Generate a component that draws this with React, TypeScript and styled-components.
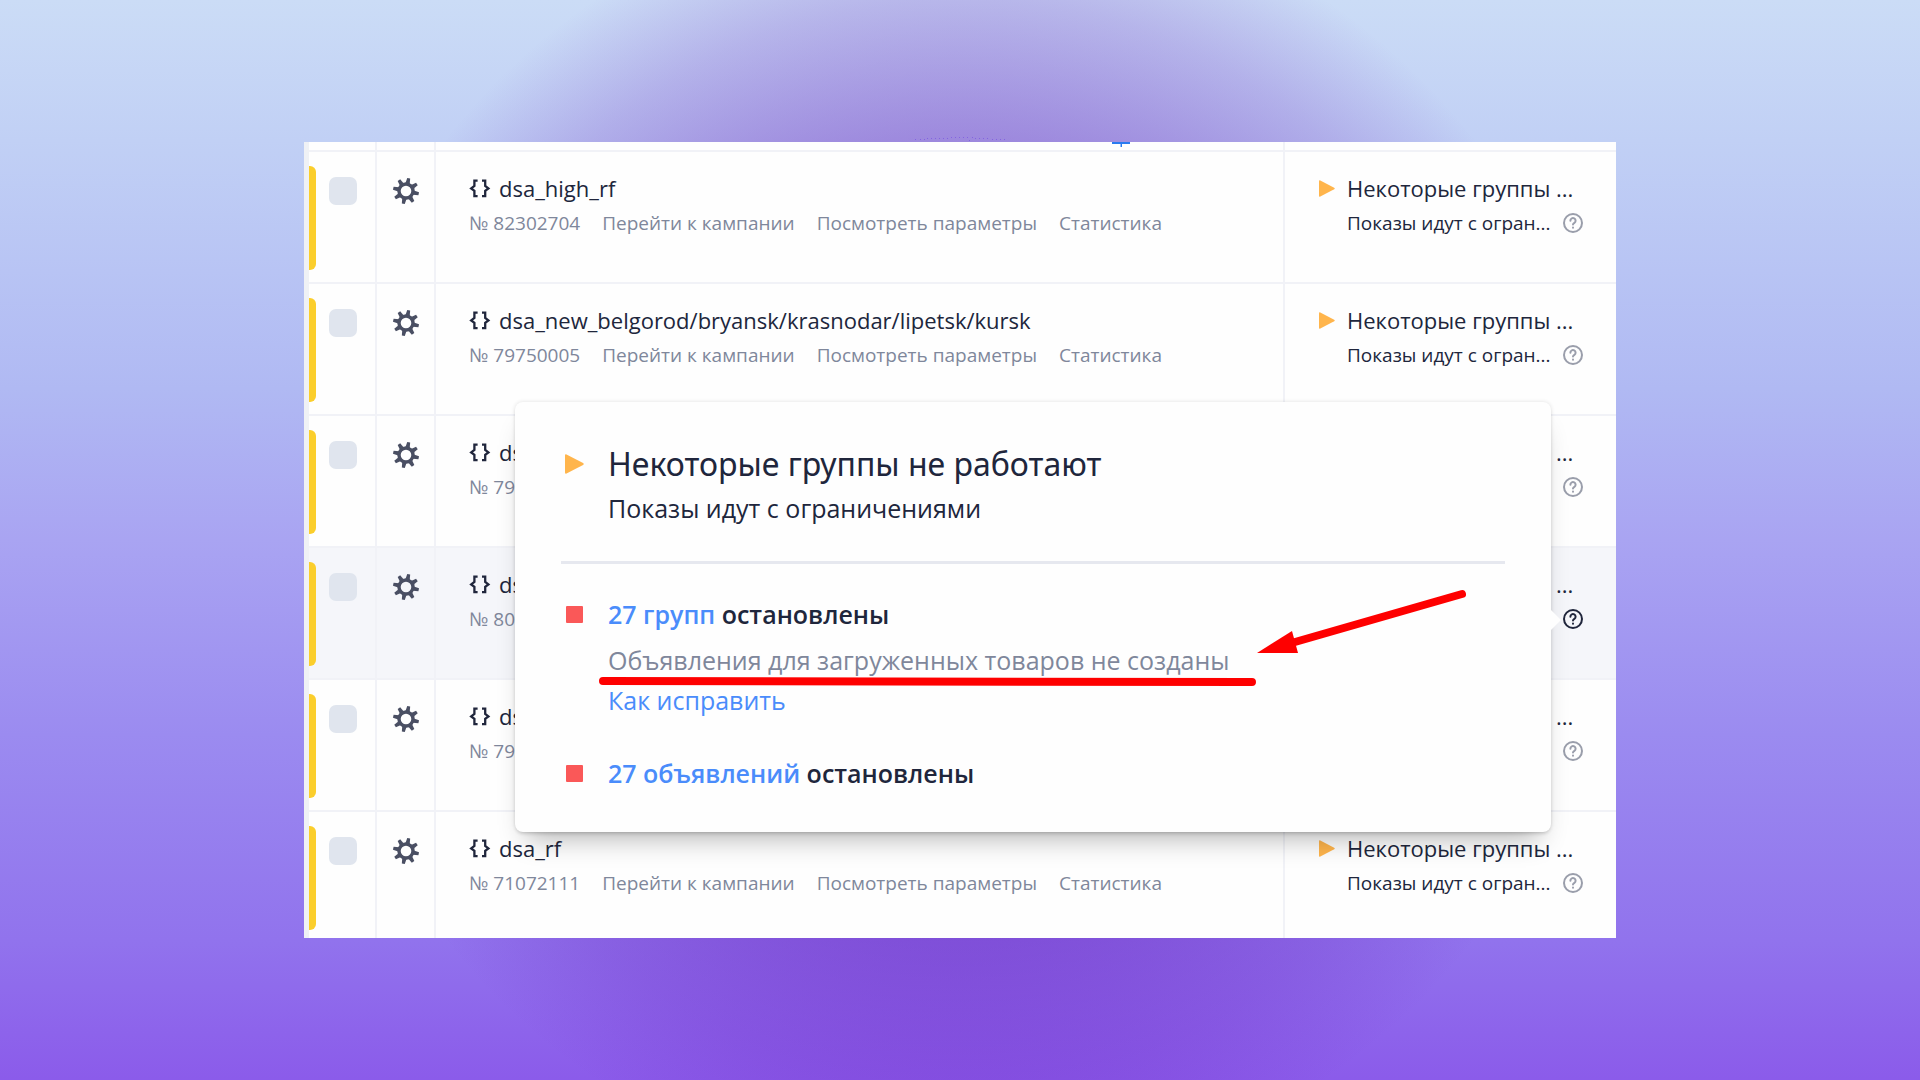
import React from "react";
import styled, { createGlobalStyle } from "styled-components";

const ink = "#20263c";
const muted = "#7f879b";
const line = "#f1f2f7";
const blue = "#4a8cfb";

const GlobalStyle = createGlobalStyle`
  *, *::before, *::after { box-sizing: border-box; }
  body {
    margin: 0;
    font-family: "Open Sans", "Noto Sans", sans-serif;
    color: ${ink};
  }
`;

const Page = styled.main`
  display: flex;
  align-items: center;
  justify-content: center;
  min-height: 100vh;
  padding: 24px;
  background:
    radial-gradient(
      circle 34vw at 50% 50%,
      rgba(100, 23, 184, 0.5) 0%,
      rgba(100, 23, 184, 0.39) 61%,
      rgba(100, 23, 184, 0.19) 83%,
      rgba(100, 23, 184, 0) 100%
    ),
    linear-gradient(
      180deg,
      #cbdcf6 0%,
      #c1d0f5 13%,
      #b0b9f3 36%,
      #a9a4f2 50%,
      #9b8bf0 68%,
      #9173ed 87%,
      #8b5bea 100%
    );
`;

const Panel = styled.section`
  position: relative;
  width: 100%;
  max-width: 1312px;
  background: #fefefe;
  border-left: 5px solid #eff1f5;
`;

const Specks = styled.svg`
  position: absolute;
  left: 606px;
  top: -8px;
`;

const Table = styled.table`
  width: 100%;
  table-layout: fixed;
  border-collapse: separate;
  border-spacing: 0;
`;

const Col = styled.col<{ $width?: number }>`
  width: ${(p) => (p.$width ? `${p.$width}px` : "auto")};
`;

const HeadCell = styled.th`
  height: 8px;
  padding: 0;
  line-height: 0;
  text-align: right;
  vertical-align: top;
  border-right: 2px solid ${line};
  &:last-child { border-right: 0; }
`;

const PinIcon = styled.svg`
  display: block;
  margin: 0 152px 0 auto;
`;

const Row = styled.tr<{ $active?: boolean }>`
  height: 132px;
  background: ${(p) => (p.$active ? "#f5f6fa" : "transparent")};
  &:last-child { height: 128px; }
`;

const Cell = styled.td`
  padding: 0;
  vertical-align: top;
  border-top: 2px solid ${line};
  border-right: 2px solid ${line};
  &:last-child { border-right: 0; }
`;

const Selector = styled.div`
  display: flex;
  align-items: flex-start;
  gap: 13px;
  padding-top: 14px;
`;

const StatusBar = styled.span`
  width: 7px;
  height: 104px;
  border-radius: 0 6px 6px 0;
  background: #fbce2c;
`;

const Checkbox = styled.input`
  appearance: none;
  width: 28px;
  height: 28px;
  margin: 11px 0 0;
  border-radius: 7px;
  background: #e0e5ee;
`;

const IconButton = styled.button<{ $active?: boolean }>`
  display: flex;
  padding: 0;
  border: 0;
  background: none;
  color: ${(p) => (p.$active ? ink : "#9a9eab")};
`;

const GearSlot = styled.div`
  display: flex;
  justify-content: center;
  padding-top: 25px;
`;

const Campaign = styled.div`
  padding: 19px 0 0 33px;
`;

const CampaignName = styled.a`
  display: flex;
  align-items: center;
  gap: 8px;
  font-size: 22px;
  line-height: 34px;
  color: ${ink};
  text-decoration: none;
  white-space: nowrap;
`;

const Meta = styled.div`
  display: flex;
  gap: 22px;
  font-size: 19px;
  line-height: 36px;
  color: ${muted};
  white-space: nowrap;
`;

const MetaLink = styled.a`
  color: inherit;
  text-decoration: none;
`;

const Status = styled.div`
  display: grid;
  grid-template-columns: 16px auto;
  column-gap: 12px;
  align-items: center;
  justify-content: start;
  padding: 19px 0 0 34px;
  white-space: nowrap;
`;

const StatusTitle = styled.span`
  font-size: 22px;
  line-height: 34px;
`;

const StatusNote = styled.span`
  grid-column: 2;
  display: flex;
  align-items: center;
  gap: 10px;
  font-size: 19px;
  line-height: 36px;
`;

const Popover = styled.aside`
  position: absolute;
  left: 206px;
  right: 65px;
  top: 260px;
  padding: 38px 46px 39px;
  border-radius: 8px;
  background: #fefefe;
  box-shadow:
    0 0 4px rgba(0, 0, 0, 0.12),
    0 3px 4px -2px rgba(0, 0, 0, 0.16),
    0 18px 26px -12px rgba(0, 0, 0, 0.3);

  &::after {
    content: "";
    position: absolute;
    left: 100%;
    top: 208px;
    border-left: 10px solid #fefefe;
    border-top: 10px solid transparent;
    border-bottom: 10px solid transparent;
  }
`;

const Section = styled.div`
  display: grid;
  grid-template-columns: 26px auto;
  column-gap: 21px;
  justify-items: start;
  align-items: center;
  font-size: 25px;
  line-height: 40px;
`;

const Marker = styled.span`
  display: flex;
  justify-self: center;
`;

const StopMark = styled.span`
  width: 17px;
  height: 17px;
  border-radius: 1px;
  background: #fa5858;
`;

const PopoverTitle = styled.h2`
  margin: 0;
  font-family: "Noto Sans", "Open Sans", sans-serif;
  font-size: 32px;
  font-weight: 400;
  line-height: 48px;
`;

const Text = styled.p<{ $muted?: boolean; $strong?: boolean }>`
  grid-column: 2;
  margin: 0;
  font-weight: ${(p) => (p.$strong ? 600 : 400)};
  color: ${(p) => (p.$muted ? muted : ink)};
`;

const Divider = styled.hr`
  height: 3px;
  margin: 33px 0 30px;
  border: 0;
  background: #e6e8ef;
`;

const Issues = styled.div`
  display: flex;
  flex-direction: column;
  gap: 33px;
`;

const IssueDetail = styled.div`
  grid-column: 2;
  padding-top: 6px;
`;

const BlueLink = styled.a`
  color: ${blue};
  text-decoration: none;
`;

const Annotation = styled.svg`
  position: absolute;
  left: 0;
  top: 0;
  overflow: visible;
  pointer-events: none;
`;

const Gear = () => (
  <svg width="28" height="28" viewBox="-14 -14 28 28" fill="none" stroke="#4a4f63" aria-hidden="true">
    <circle r="7" strokeWidth="3.4" />
    {[12, 57, 102, 147, 192, 237, 282, 327].map((angle) => (
      <path key={angle} d="M7.5 -2.2L13 -1.5V1.5L7.5 2.2Z" fill="#4a4f63" stroke="none" transform={`rotate(${angle})`} />
    ))}
  </svg>
);

const Braces = () => (
  <svg width="22" height="20" viewBox="0 -1 22 20" fill="none" stroke={ink} strokeWidth="2.3" aria-hidden="true">
    <path d="M8.600 1.600H5.400V7L2.200 9.400L5.400 11.800V17.200H8.600" />
    <path d="M13 1.600H16.200V7L19.400 9.400L16.200 11.800V17.200H13" />
  </svg>
);

const Play = ({ width, height }: { width: number; height: number }) => (
  <svg width={width} height={height} viewBox="0 0 16 17" preserveAspectRatio="none" fill="#ffb54c" aria-hidden="true">
    <path d="M0 1.2Q0 -0.1 1.3 0.5L15.2 7.700Q16.3 8.5 15.2 9.3L1.3 16.500Q0 17.1 0 15.8Z" />
  </svg>
);

const Help = () => (
  <svg width="24" height="24" viewBox="0 0 24 24" fill="none" stroke="currentColor" strokeWidth="2" strokeLinecap="round" aria-hidden="true">
    <circle cx="12" cy="12" r="9" />
    <path d="M9.4 9.8a2.6 2.6 0 1 1 4 2.1c-.9.6-1.4 1-1.4 1.7" />
    <path d="M12 16.6v.1" />
  </svg>
);

type CampaignRow = { name: string; id: string; links?: boolean; active?: boolean };

const campaigns: CampaignRow[] = [
  { name: "dsa_high_rf", id: "82302704", links: true },
  { name: "dsa_new_belgorod/bryansk/krasnodar/lipetsk/kursk", id: "79750005", links: true },
  { name: "ds", id: "79" },
  { name: "ds", id: "80", active: true },
  { name: "ds", id: "79" },
  { name: "dsa_rf", id: "71072111", links: true },
];

const specks = [
  [0, 6], [5, 6], [9, 6], [12, 5], [16, 5], [20, 5], [24, 5], [28, 5], [32, 5], [36, 4], [40, 4],
  [44, 4], [48, 4], [52, 4], [54, 7], [57, 4], [60, 5], [64, 5], [68, 5], [72, 5], [77, 6],
  [81, 6], [85, 6], [89, 6],
];

export default function App() {
  return (
    <Page>
      <GlobalStyle />
      <Panel>
        <Specks width="92" height="8" fill="#8464e0" aria-hidden="true">
          {specks.map(([x, y]) => (
            <rect key={x} x={x} y={y - 1} width="1" height="1" />
          ))}
        </Specks>
        <Table>
          <colgroup>
            <Col $width={68} />
            <Col $width={59} />
            <Col />
            <Col $width={331} />
          </colgroup>
          <thead>
            <tr>
              <HeadCell />
              <HeadCell />
              <HeadCell>
                <PinIcon width="20" height="5" viewBox="0 0 20 5" fill="#2a7bf0" aria-hidden="true">
                  <path d="M1 0H19V2H11V5H9.500V2H1Z" />
                </PinIcon>
              </HeadCell>
              <HeadCell />
            </tr>
          </thead>
          <tbody>
            {campaigns.map((c, i) => (
              <Row key={i} $active={c.active}>
                <Cell>
                  <Selector>
                    <StatusBar />
                    <Checkbox type="checkbox" aria-label={c.name} />
                  </Selector>
                </Cell>
                <Cell>
                  <GearSlot>
                    <IconButton type="button">
                      <Gear />
                    </IconButton>
                  </GearSlot>
                </Cell>
                <Cell>
                  <Campaign>
                    <CampaignName href="#">
                      <Braces />
                      {c.name}
                    </CampaignName>
                    <Meta>
                      <span>№ {c.id}</span>
                      {c.links && (
                        <>
                          <MetaLink href="#">Перейти к кампании</MetaLink>
                          <MetaLink href="#">Посмотреть параметры</MetaLink>
                          <MetaLink href="#">Статистика</MetaLink>
                        </>
                      )}
                    </Meta>
                  </Campaign>
                </Cell>
                <Cell>
                  <Status>
                    <Play width={16} height={17} />
                    <StatusTitle>Некоторые группы ...</StatusTitle>
                    <StatusNote>
                      Показы идут с огран...
                      <IconButton type="button" $active={c.active}>
                        <Help />
                      </IconButton>
                    </StatusNote>
                  </Status>
                </Cell>
              </Row>
            ))}
          </tbody>
        </Table>

        <Popover>
          <Section>
            <Marker>
              <Play width={19} height={20} />
            </Marker>
            <PopoverTitle>Некоторые группы не работают</PopoverTitle>
            <Text>Показы идут с ограничениями</Text>
          </Section>
          <Divider />
          <Issues>
            <Section>
              <Marker>
                <StopMark />
              </Marker>
              <Text $strong>
                <BlueLink href="#">27 групп</BlueLink> остановлены
              </Text>
              <IssueDetail>
                <Text $muted>Объявления для загруженных товаров не созданы</Text>
                <BlueLink href="#">Как исправить</BlueLink>
              </IssueDetail>
            </Section>
            <Section>
              <Marker>
                <StopMark />
              </Marker>
              <Text $strong>
                <BlueLink href="#">27 объявлений</BlueLink> остановлены
              </Text>
            </Section>
          </Issues>
          <Annotation width="1036" height="432" fill="#fe0000" stroke="#fe0000" aria-hidden="true">
            <path d="M88 279L737 280" strokeWidth="8" strokeLinecap="round" />
            <path d="M947 192L780 240" strokeWidth="8" strokeLinecap="round" />
            <path d="M742 251L777 229L783 251Z" strokeWidth="0" />
          </Annotation>
        </Popover>
      </Panel>
    </Page>
  );
}
